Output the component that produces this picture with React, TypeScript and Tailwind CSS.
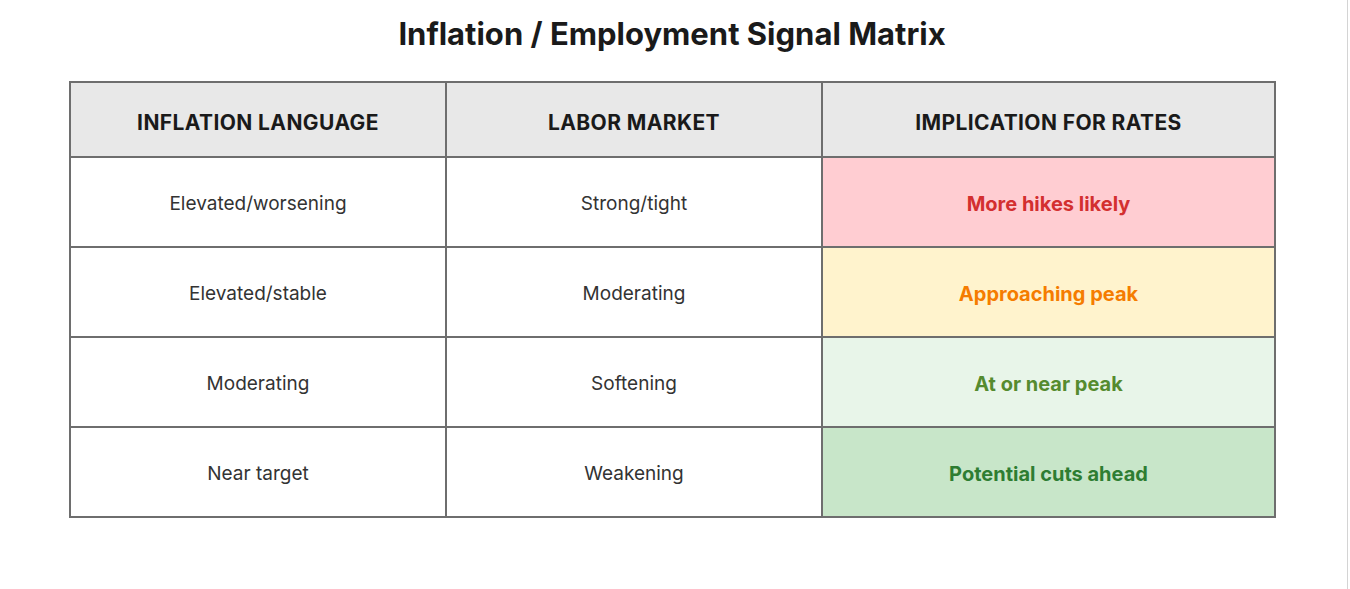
import React from "react";

const rows = [
  { a: "Elevated/worsening", b: "Strong/tight", c: "More hikes likely", bg: "bg-[#ffcdd2]", fg: "text-[#d32f2f]" },
  { a: "Elevated/stable", b: "Moderating", c: "Approaching peak", bg: "bg-[#fff3cd]", fg: "text-[#f57c00]" },
  { a: "Moderating", b: "Softening", c: "At or near peak", bg: "bg-[#e8f5e9]", fg: "text-[#558b2f]" },
  { a: "Near target", b: "Weakening", c: "Potential cuts ahead", bg: "bg-[#c8e6c9]", fg: "text-[#2e7d32]" },
];

export default function App() {
  return (
    <div className="w-[1350px] h-[589px] bg-white font-['Inter','Noto_Sans',sans-serif]">
      <div className="w-[1348px] h-[589px] border-r border-[#d4d4d4] pl-[69px] pt-[16px]">
        <h1 className="w-[1206px] text-center text-[31px] leading-[36px] font-bold text-[#1a1a1a]">
          Inflation / Employment Signal Matrix
        </h1>
        <table className="mt-[29px] w-[1205px] table-fixed border-collapse border-2 border-[#6e6e6e]">
          <colgroup>
            <col className="w-[376px]" />
            <col className="w-[376px]" />
            <col className="w-[453px]" />
          </colgroup>
          <thead>
            <tr className="h-[75px] bg-[#e8e8e8]">
              {["INFLATION LANGUAGE", "LABOR MARKET", "IMPLICATION FOR RATES"].map((h) => (
                <th
                  key={h}
                  className="border-2 border-[#6e6e6e] pt-[7px] text-center text-[21px] tracking-[0.4px] font-bold text-[#1a1a1a]"
                >
                  {h}
                </th>
              ))}
            </tr>
          </thead>
          <tbody>
            {rows.map((r) => (
              <tr key={r.a} className="h-[90px]">
                <td className="border-2 border-[#6e6e6e] pt-[4px] text-center text-[19px] text-[#333333]">{r.a}</td>
                <td className="border-2 border-[#6e6e6e] pt-[4px] text-center text-[19px] text-[#333333]">{r.b}</td>
                <td className={`border-2 border-[#6e6e6e] pt-[4px] text-center text-[20px] font-bold ${r.bg} ${r.fg}`}>
                  {r.c}
                </td>
              </tr>
            ))}
          </tbody>
        </table>
      </div>
    </div>
  );
}
